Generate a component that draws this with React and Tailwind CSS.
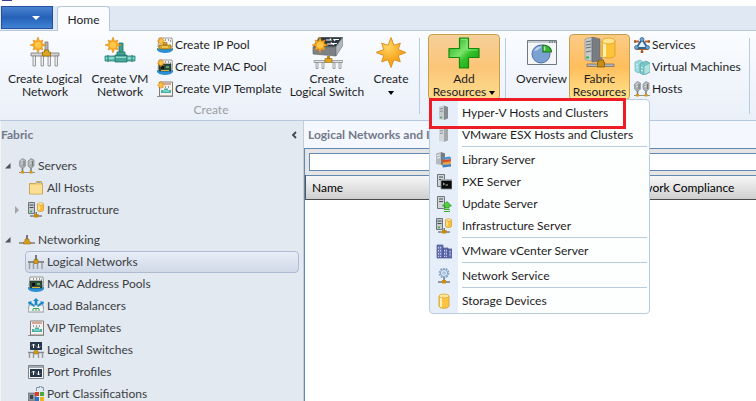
import React from "react";

const burst = (cx, cy, outer, inner) =>
  Array.from({ length: 16 }, (_, i) => {
    const r = i % 2 ? inner : i % 4 ? outer * 0.88 : outer;
    const a = (i * Math.PI) / 8 - Math.PI / 2;
    return `${(cx + r * Math.cos(a)).toFixed(2)},${(cy + r * Math.sin(a)).toFixed(2)}`;
  }).join(" ");

function Burst({ cx, cy, r }) {
  return (
    <g>
      <polygon points={burst(cx, cy, r, r * 0.52)} fill="#f7a81c" stroke="#e08a12" strokeWidth={r / 14} />
      <circle cx={cx} cy={cy} r={r * 0.42} fill="#ffc64a" />
    </g>
  );
}

function Svg({ size = 16, children }) {
  return (
    <svg
      aria-hidden="true"
      viewBox={`0 0 ${size} ${size}`}
      className={size === 32 ? "block size-8 shrink-0" : "block size-4 shrink-0"}
    >
      {children}
    </svg>
  );
}

/* Large ribbon icons */

const LogicalNetworkLarge = () => (
  <Svg size={32}>
    <path d="M16 5h3v9h-3z" fill="#b5b5b5" stroke="#777" strokeWidth="0.8" />
    <path d="M2 16h28v3H2z" fill="#d6d6d6" stroke="#767676" strokeWidth="0.8" />
    <path d="M4 19h2.500v10H4zM12 19h2.500v10H12zM19 19h2.500v10H19zM26 19h2.500v10H26z" fill="#ececec" stroke="#858585" strokeWidth="0.8" />
    <path d="M15.500 13h4v2h2v4h-8v-4h2z" fill="#dda51e" stroke="#9a6b0a" strokeWidth="0.8" />
    <Burst cx={9} cy={8} r={8} />
  </Svg>
);

const VmNetworkLarge = () => (
  <Svg size={32}>
    <path d="M15 6h4v12h-4z" fill="#3a9f90" stroke="#1f6f68" strokeWidth="0.8" />
    <path d="M1 19h30v5H1z" fill="#58b9ab" stroke="#2b857c" strokeWidth="0.8" />
    <path d="M2 20.500h28v1.200H2z" fill="#b4e8de" />
    <path d="M13 15h8v4h-8zM11 18h12v7H11z" fill="#46a899" stroke="#1f6f68" strokeWidth="0.8" />
    <path d="M12 19.500h10v1.500H12z" fill="#93d8cc" />
    <path d="M4 18v7M28 18v7" stroke="#2b857c" strokeWidth="1.200" />
    <Burst cx={9} cy={8} r={8} />
  </Svg>
);

const LogicalSwitchLarge = () => (
  <Svg size={32}>
    <path d="M8 0h24l-7 10H2z" fill="#2c3740" stroke="#9aa1a7" strokeWidth="0.7" />
    <path d="M2 10h23v9L2 17z" fill="#7d8186" stroke="#5a5f64" strokeWidth="0.6" />
    <path d="M25 10l7-10v8l-7 11z" fill="#b3b8bc" stroke="#6b7075" strokeWidth="0.6" />
    <path d="M15 3h5l-1-1.500M28 2.500h-5l1 1.500M16 7h5l-1-1.500M26 6.500h-4l1 1.500" fill="none" stroke="#fff" strokeWidth="1.200" />
    <path d="M16 19h3v5h-3z" fill="#b98a22" />
    <path d="M3 23.500h11v2H3zM21 23.500h11v2H21z" fill="#e2e2e2" stroke="#858585" strokeWidth="0.7" />
    <path d="M5 25.500h2v6H5zM11 25.500h2v6h-2zM22 25.500h2v6h-2zM28 25.500h2v6h-2z" fill="#ececec" stroke="#858585" strokeWidth="0.7" />
    <path d="M14 21.500h7v4h-7z" fill="#dda51e" stroke="#94690d" strokeWidth="0.6" />
    <Burst cx={9} cy={8} r={8} />
  </Svg>
);

const CreateLarge = () => (
  <Svg size={32}>
    <defs>
      <radialGradient id="burstFill" cx="0.4" cy="0.3">
        <stop offset="0" stopColor="#ffd564" />
        <stop offset="1" stopColor="#f7a51a" />
      </radialGradient>
    </defs>
    <polygon points={burst(16, 15.5, 15, 7.8)} fill="url(#burstFill)" stroke="#dd9224" strokeWidth="1" />
  </Svg>
);

const AddLarge = () => (
  <Svg size={32}>
    <defs>
      <linearGradient id="plusFill" x1="0" y1="0" x2="1" y2="1">
        <stop offset="0" stopColor="#16a812" />
        <stop offset="0.45" stopColor="#7be36b" />
        <stop offset="0.6" stopColor="#35c22a" />
        <stop offset="1" stopColor="#0c9a0b" />
      </linearGradient>
    </defs>
    <path d="M11.500 1h9v10.500H31v9H20.500V31h-9V20.500H1v-9h10.500z" fill="url(#plusFill)" stroke="#118a0f" strokeWidth="1.200" strokeLinejoin="round" />
    <path d="M13 2.500h6v10.500h10.500" fill="none" stroke="#8eea7f" strokeWidth="0.8" />
  </Svg>
);

const OverviewLarge = () => (
  <Svg size={32}>
    <path d="M1.500 3.500h29v24h-29z" fill="#f4f6f8" stroke="#6f7881" />
    <path d="M2 4h28v2H2z" fill="#c3cbd3" />
    <path d="M23 5h1.500M25.500 5H27M28 5h1.500" stroke="#3f4a54" />
    <circle cx="15" cy="17" r="9" fill="#7ba0d2" stroke="#4d73a9" />
    <path d="M8 14c2-4 5-5 8-4-3 1-4 4-8 4z" fill="#c3d6ef" />
    <path d="M17 15V8c4.500 0 8.500 3 8.500 7z" fill="#3db53a" stroke="#197a1b" strokeWidth="1.200" />
    <path d="M18.500 9.500v4" stroke="#b6efa8" strokeWidth="1.500" />
  </Svg>
);

const FabricLarge = () => (
  <Svg size={32}>
    <path d="M1 2l7-2v24l-7-1z" fill="#c6cacd" stroke="#8b9196" strokeWidth="0.6" />
    <path d="M8 0l8 2v22l-8 1z" fill="#777d83" stroke="#5f656a" strokeWidth="0.6" />
    <path d="M2 5l5-1M2 8l5-1M2 11l5-1M2 15l5-1" stroke="#6b7278" strokeWidth="1.200" />
    <path d="M2 20.500h3" stroke="#39b54a" strokeWidth="2" />
    <path d="M18 4v14c0 4 13 4 13 0V4z" fill="#fcc33b" stroke="#d79a19" strokeWidth="0.7" />
    <path d="M20.500 6v14" stroke="#fff0b0" strokeWidth="3" />
    <ellipse cx="24.500" cy="4" rx="6.500" ry="3" fill="#ffe48d" stroke="#d79a19" strokeWidth="0.7" />
    <path d="M3 27h27v2.500H3z" fill="#b5b5b5" stroke="#686868" strokeWidth="0.7" />
    <path d="M15.500 20h3v5h-3z" fill="#858585" />
    <path d="M14.500 23h5v2h1v5h-7v-5h1z" fill="#c78f16" stroke="#83590a" strokeWidth="0.8" />
  </Svg>
);

/* Small icons */

const Comb = ({ y = 0 }) => (
  <g>
    <path d={`M0 ${7 + y}h16v2H0z`} fill="#8b8b8b" />
    <path d={`M1.500 ${9 + y}v6M5.500 ${9 + y}v6M9.500 ${9 + y}v6M14 ${9 + y}v6`} stroke="#9d9d9d" strokeWidth="1.500" />
    <path d={`M6 ${5.5 + y}h4v4H6z`} fill="#d39d1c" stroke="#8b620b" strokeWidth="0.5" />
  </g>
);

const LogicalNetworkIcon = () => (
  <Svg>
    <path d="M7 1h2v5H7z" fill="#777" />
    <Comb />
  </Svg>
);

const PoolBase = ({ children }) => (
  <Svg>
    <path d="M2 1h13l1 9H1z" fill="#f3f3f3" stroke="#777" strokeWidth="0.7" />
    <path d="M5 3h1M8 3h1M11 3h1M13 4h1" stroke="#444" />
    <path d="M0 11h16v2c-2 4-14 4-16 0z" fill="#2a8fd4" />
    <path d="M1 11.500h14" stroke="#86c8ef" />
    {children}
  </Svg>
);

const IpPoolIcon = () => (
  <PoolBase>
    <path d="M2 8h12v4H2zM6 5.500h4V8H6z" fill="#d9a521" stroke="#8d680f" strokeWidth="0.6" />
    <path d="M5 10h6" stroke="#ffe28a" />
    <Burst cx={4} cy={4} r={4} />
  </PoolBase>
);

const MacPoolIcon = ({ fresh }) => (
  <PoolBase>
    <path d="M2 5h12v7H2z" fill="#2d4b3a" stroke="#1d2b22" strokeWidth="0.6" />
    <path d="M4 7h3v3H4z" fill="#101010" />
    <path d="M9 7h3v2H9z" fill="#5ba96d" />
    <path d="M4 11.500h8" stroke="#d9b23c" />
    {fresh && <Burst cx={4} cy={4} r={4} />}
  </PoolBase>
);

const VipIcon = ({ fresh }) => (
  <Svg>
    <path d="M2.500 1h13v14h-13z" fill="#f4f1ee" stroke="#857b75" />
    <path d="M4 3h10" stroke="#b9785a" strokeWidth="1.200" />
    <path d="M5 6h1M8 6h1M11 6h1" stroke="#444" />
    <path d="M4 9h10v3H4zM7 7.500h4V9H7z" fill="#47b0a5" />
    <path d="M6 10h6" stroke="#b6e8e0" />
    <path d="M0 15.500h16" stroke="#8d8d8d" />
    {fresh && <Burst cx={4} cy={4} r={4} />}
  </Svg>
);

const ServicesIcon = () => (
  <Svg>
    <path d="M0 4.500h5M11 4.500h5M2 12h12M8 12v4" stroke="#c1622b" strokeWidth="2" />
    <path d="M1 3v3M15 3v3M6.500 15h3" stroke="#93451b" />
    <path d="M8 2l5.500 9h-11z" fill="#e2f0fa" stroke="#2d6291" strokeWidth="1.800" />
    <circle cx="8" cy="2.500" r="2" fill="#6fa4ce" stroke="#2d6291" strokeWidth="0.7" />
    <circle cx="2.500" cy="10.500" r="2" fill="#6fa4ce" stroke="#2d6291" strokeWidth="0.7" />
    <circle cx="13.500" cy="10.500" r="2" fill="#6fa4ce" stroke="#2d6291" strokeWidth="0.7" />
  </Svg>
);

const VmIcon = () => (
  <Svg>
    <path d="M1 3l5-2 3 2v9l-5 2-3-2z" fill="#9ad9d9" stroke="#6cb8bb" strokeWidth="0.7" />
    <path d="M6 5l6-3 4 2v9l-6 3-4-2z" fill="#7cc6c9" stroke="#4ea1a6" strokeWidth="0.7" />
    <path d="M10 7l6-3v9l-6 3z" fill="#b0e4e2" stroke="#4ea1a6" strokeWidth="0.5" />
    <path d="M2 5l2 1M2 8l2 1M7 8l2 1M7 11l2 1" stroke="#e0f7f5" />
  </Svg>
);

const HostsIcon = () => (
  <Svg>
    <path d="M3.500 9v5M12 9v5" stroke="#777" strokeWidth="1.500" />
    <path d="M0.500 3l3-2.500 3 1.500v6l-2 2h-2l-2-2zM9 3l3-2.500L15 2v6l-2 2h-2L9 8z" fill="#a9afb1" stroke="#8b9193" strokeWidth="0.7" />
    <path d="M2 3.500l2-1M2 6l2-1M10.500 3.500l2-1M10.500 6l2-1" stroke="#dfe4e5" />
    <path d="M5 3v5M13.500 3v5" stroke="#737a7c" />
    <path d="M0 14.500h16" stroke="#929292" />
    <path d="M2 13h3v2.500H2zM10.500 13h3v2.500h-3z" fill="#d89a14" />
  </Svg>
);

const FolderIcon = () => (
  <Svg>
    <path d="M1.500 3.500h6l1-2h5v2h1v10.500h-13z" fill="#f4d078" stroke="#c39b45" strokeWidth="0.8" />
    <path d="M2 5h12v8.500H2z" fill="#fbdf94" />
    <path d="M9 2.700h3.500" stroke="#6ca7df" />
  </Svg>
);

const InfraIcon = () => (
  <Svg>
    <path d="M0.500 0.500h6v11h-6z" fill="#c3c9cc" stroke="#62696e" strokeWidth="0.9" />
    <path d="M1.500 3h4M1.500 5.500h4" stroke="#454d52" />
    <path d="M2 9.500h2" stroke="#35b143" strokeWidth="1.500" />
    <path d="M9.500 2v6c0 2 6 2 6 0V2z" fill="#fbc13b" stroke="#c98f1c" strokeWidth="0.6" />
    <path d="M11 3v5" stroke="#fff0b5" strokeWidth="1.200" />
    <ellipse cx="12.500" cy="2" rx="3" ry="1.300" fill="#ffe594" stroke="#c98f1c" strokeWidth="0.5" />
    <path d="M2 14h12" stroke="#777" strokeWidth="1.400" />
    <path d="M7.500 10h1.500v2H7.500z" fill="#777" />
    <path d="M6 12h4.500v3.500H6z" fill="#c58a10" />
  </Svg>
);

const NetworkingIcon = () => (
  <Svg>
    <path d="M0 11h16" stroke="#999" strokeWidth="2" />
    <path d="M8 3v4" stroke="#777" strokeWidth="2" />
    <path d="M6 7h4v2l1.500 1v2h-7v-2L6 9z" fill="#d49a18" stroke="#936610" strokeWidth="0.5" />
  </Svg>
);

const BalancerIcon = () => (
  <Svg>
    <path d="M1 7h14l1 7H0z" fill="#f0f2f3" stroke="#848b90" strokeWidth="0.8" />
    <path d="M8 0l3 3H9.300v4H6.700V3H5zM0 4l4-1-1 1 4 4-1 1-4-3-1 1zM16 4l-4-1 1 1-4 4 1 1 4-3 1 1z" fill="#1588c9" />
    <path d="M5 10.500h6M5 13v-2M8 13v-2M11 13v-2" stroke="#3ca75a" />
  </Svg>
);

const SwitchIcon = () => (
  <Svg>
    <path d="M2 0h12v8H2z" fill="#26364b" />
    <path d="M5.500 6V2M4 3.500L5.500 2 7 3.500M10.500 2v4M9 4.500L10.500 6 12 4.500" fill="none" stroke="#fff" />
    <path d="M0 10.500h16" stroke="#888" strokeWidth="1.500" />
    <path d="M1.500 11v5M5.500 11v5M10.500 11v5M14.500 11v5" stroke="#999" strokeWidth="1.400" />
    <path d="M6 8.500h4v3.500H6z" fill="#d39d1c" stroke="#8b620b" strokeWidth="0.4" />
  </Svg>
);

const PortProfileIcon = () => (
  <Svg>
    <path d="M0.500 1.500h15v13h-15z" fill="#f4f6f8" stroke="#7a8188" />
    <path d="M1 2h14v2H1z" fill="#a4abb3" />
    <path d="M2 5h12v8H2z" fill="#26364b" />
    <path d="M5.500 11V7M4 8.500L5.500 7 7 8.500M10.500 7v4M9 9.500l1.500 1.500L12 9.500" fill="none" stroke="#fff" />
  </Svg>
);

const PortClassIcon = () => (
  <Svg>
    <path d="M8.500 5V1.500h3V0h2v1.500h2V5" fill="#e3e9f1" stroke="#8092ac" />
    <path d="M0 7h8v8H0z" fill="#8e959b" stroke="#5d6368" strokeWidth="0.6" />
    <path d="M2 9h3v4H2z" fill="#3d454c" />
    <path d="M7 6h4v4H7z" fill="#dd3d27" />
    <path d="M12 6h4v4h-4z" fill="#49a83c" />
    <path d="M7 11h4v4H7z" fill="#2f72c4" />
    <path d="M12 11h4v4h-4z" fill="#efb31d" />
  </Svg>
);

const Tower = ({ light }) => (
  <g>
    <path d="M3 2l5-1.500V15l-5-1z" fill={light ? "#d3d6d8" : "#c6cacc"} />
    <path d="M8 0.500L12 2v11.500L8 15z" fill={light ? "#a3a8ac" : "#858b90"} />
    <path d="M4 4l3-0.500M4 6.500L7 6" stroke="#8d9296" />
  </g>
);

const HyperVIcon = () => (
  <Svg>
    <Tower />
    <path d="M4 12.500h2" stroke="#36b34a" strokeWidth="1.500" />
  </Svg>
);

const EsxIcon = () => (
  <Svg>
    <Tower light />
  </Svg>
);

const LibraryIcon = () => (
  <Svg>
    <path d="M0 1.500L5 0v13l-5-1z" fill="#b5babd" />
    <path d="M5 0l4 1.500V12l-4 1z" fill="#747a7f" />
    <path d="M1 3.500L4 3M1 6l3-0.500" stroke="#f0f2f3" />
    <path d="M6 5.500l8-1 1.500 2-8 1.500z" fill="#4f94cf" />
    <path d="M6 8l9-1v2.500l-8 1.500z" fill="#d3502f" />
    <path d="M7 10.500l8-1V12l-8 1z" fill="#e9a13a" />
    <path d="M6 13l9-1v2.500L7 15.500z" fill="#3e82bd" />
  </Svg>
);

const SmallServer = () => (
  <g>
    <path d="M1.500 0.500h7v12h-7z" fill="#d0d5d7" stroke="#62696e" strokeWidth="0.9" />
    <path d="M3 3h4M3 5.500h4" stroke="#4b5358" />
  </g>
);

const PxeIcon = () => (
  <Svg>
    <SmallServer />
    <path d="M5 5.500h11V15H5z" fill="#0b0b0b" stroke="#8c9297" strokeWidth="0.8" />
    <path d="M5 6h11" stroke="#c5cad0" strokeWidth="1.200" />
    <path d="M7 9l1.500 1L7 11M9.500 11H12" fill="none" stroke="#fff" strokeWidth="0.7" />
  </Svg>
);

const UpdateIcon = () => (
  <Svg>
    <SmallServer />
    <path d="M11 5.500l4.500 4.500H13v2H9v-2H6.500z" fill="#53cf3f" stroke="#25951c" strokeWidth="0.8" />
    <path d="M8 13.500h6M8 15.500h6" stroke="#35ac29" />
  </Svg>
);

const VCenterIcon = () => (
  <Svg>
    <path d="M1 2h6v13H1zM7 5h5v10H7zM12 6h4v9h-4z" fill="#6a74b4" stroke="#48508c" strokeWidth="0.7" />
    <path d="M2.500 4v10M4.500 4v10M8.500 7v7M10.500 7v7M14 8v6" stroke="#c9cdec" strokeDasharray="1.500 1.500" />
  </Svg>
);

const ServiceIcon = () => (
  <Svg>
    <circle cx="8" cy="5" r="4.500" fill="none" stroke="#82a7c9" strokeWidth="1.800" strokeDasharray="1.800 1" />
    <circle cx="8" cy="5" r="3.500" fill="#e4eff9" stroke="#7ba2c5" />
    <circle cx="8" cy="5" r="1.200" fill="#fff" stroke="#668db1" strokeWidth="0.7" />
    <path d="M8 9.500v3" stroke="#777" strokeWidth="1.500" />
    <path d="M2 14h12" stroke="#777" strokeWidth="1.500" />
    <path d="M6 12h4v3.500H6z" fill="#cb8e12" />
  </Svg>
);

const StorageIcon = () => (
  <Svg>
    <path d="M3 3v10c0 3 10 3 10 0V3z" fill="#fbc443" stroke="#d89b24" strokeWidth="0.8" />
    <path d="M5 4v10" stroke="#fff2b8" strokeWidth="2" />
    <ellipse cx="8" cy="3" rx="5" ry="2" fill="#ffe797" stroke="#d89b24" strokeWidth="0.7" />
  </Svg>
);

/* Ribbon parts */

const tones = {
  plain: "border-transparent",
  open: "border-[#c2a050] bg-linear-to-b from-[#f5d09a] via-[#fcc577] to-[#fbdc8e]",
  active: "border-[#c2a050] bg-linear-to-b from-[#fbcb86] via-[#ffbe5b] to-[#ffe38f]",
};

const Arrow = () => <span className="inline-block border-x-3 border-t-4 border-x-transparent border-t-black align-middle" />;

function LargeButton({ icon, children, tone = "plain", className }) {
  return (
    <button
      type="button"
      className={`flex h-[66px] shrink-0 flex-col items-center gap-[3px] rounded-sm border pt-[2px] text-center leading-[13px] whitespace-nowrap ${tones[tone]} ${className}`}
    >
      {icon}
      <span>{children}</span>
    </button>
  );
}

function SmallButton({ icon, label }) {
  return (
    <button type="button" className="flex h-[22px] items-center gap-[2px] whitespace-nowrap">
      {icon}
      {label}
    </button>
  );
}

const Divider = () => <div className="mt-1 h-[76px] w-px shrink-0 bg-[#b9cbdf]" />;

const menuGroups = [
  [
    ["Hyper-V Hosts and Clusters", HyperVIcon],
    ["VMware ESX Hosts and Clusters", EsxIcon],
  ],
  [
    ["Library Server", LibraryIcon],
    ["PXE Server", PxeIcon],
    ["Update Server", UpdateIcon],
    ["Infrastructure Server", InfraIcon],
  ],
  [["VMware vCenter Server", VCenterIcon]],
  [["Network Service", ServiceIcon]],
  [["Storage Devices", StorageIcon]],
];

function ResourceMenu() {
  return (
    <div className="absolute top-[65px] left-px z-20 w-[221px] rounded-sm border border-[#b9cbdf] bg-linear-to-r from-[#e6eef9] from-[28px] to-[#fdfefe] to-[28px] pt-[2px] pb-px">
      {menuGroups.map((group, g) => (
        <div key={g} role="group">
          {g > 0 && <div className="mr-[2px] ml-[32px] h-[3px] border-t border-[#b9cbdf]" />}
          {group.map(([label, Icon]) => (
            <button key={label} type="button" className="flex h-[22px] w-full items-center gap-[10px] pl-[6px] whitespace-nowrap">
              <Icon />
              {label}
            </button>
          ))}
        </div>
      ))}
      <div className="pointer-events-none absolute -top-[2px] -left-px h-[31px] w-[197px] border-3 border-[#ee1c25]" />
    </div>
  );
}

function Ribbon() {
  return (
    <div className="relative z-10 flex h-[91px] shrink-0 border-y border-[#b5c8de] bg-linear-to-b from-[#fafcff] to-[#eaf0f9] pt-[3px] pl-[3px]">
      <div className="flex w-[416px] shrink-0 flex-col">
        <div className="flex">
          <LargeButton className="w-[84px]" icon={<LogicalNetworkLarge />}>
            Create Logical
            <br />
            Network
          </LargeButton>
          <LargeButton className="w-[66px]" icon={<VmNetworkLarge />}>
            Create VM
            <br />
            Network
          </LargeButton>
          <div className="w-[131px] shrink-0 pl-1">
            <SmallButton icon={<IpPoolIcon />} label="Create IP Pool" />
            <SmallButton icon={<MacPoolIcon fresh />} label="Create MAC Pool" />
            <SmallButton icon={<VipIcon fresh />} label="Create VIP Template" />
          </div>
          <LargeButton className="w-[86px]" icon={<LogicalSwitchLarge />}>
            Create
            <br />
            Logical Switch
          </LargeButton>
          <LargeButton className="w-[42px]" icon={<CreateLarge />}>
            Create
            <br />
            <Arrow />
          </LargeButton>
        </div>
        <div className="mt-[2px] text-center leading-4 text-[#9b9ea3]">Create</div>
      </div>
      <Divider />
      <div className="relative ml-2 shrink-0">
        <LargeButton tone="open" className="w-[72px]" icon={<AddLarge />}>
          Add
          <br />
          Resources <Arrow />
        </LargeButton>
        <ResourceMenu />
      </div>
      <div className="w-[5px] shrink-0" />
      <Divider />
      <div className="ml-2 flex shrink-0">
        <LargeButton className="w-[55px]" icon={<OverviewLarge />}>
          Overview
        </LargeButton>
        <LargeButton tone="active" className="w-[61px]" icon={<FabricLarge />}>
          Fabric
          <br />
          Resources
        </LargeButton>
        <div className="w-[119px] pl-1">
          <SmallButton icon={<ServicesIcon />} label="Services" />
          <SmallButton icon={<VmIcon />} label="Virtual Machines" />
          <SmallButton icon={<HostsIcon />} label="Hosts" />
        </div>
      </div>
      <Divider />
    </div>
  );
}

/* Navigation tree */

const Expanded = () => (
  <svg aria-hidden="true" viewBox="0 0 8 8" className="size-2 shrink-0">
    <path d="M6.500 1v5.500H1z" fill="#505357" />
  </svg>
);

const Collapsed = () => (
  <svg aria-hidden="true" viewBox="0 0 8 8" className="size-2 shrink-0">
    <path d="M2 0l4 4-4 4z" fill="#a3a6aa" />
  </svg>
);

function TreeRoot({ icon, label }) {
  return (
    <button type="button" className="flex h-[22px] shrink-0 items-center gap-[3px] pl-[3px]">
      <Expanded />
      <span className="ml-1">{icon}</span>
      {label}
    </button>
  );
}

function TreeItem({ icon, label, selected, twisty }) {
  return (
    <div className="flex h-[22px] shrink-0 items-center pr-1">
      <span className="flex w-[24px] shrink-0 justify-end pr-1">{twisty && <Collapsed />}</span>
      <button
        type="button"
        className={`flex h-[22px] flex-1 items-center gap-[3px] rounded-sm border pl-[2px] ${
          selected ? "border-[#aebbd2] bg-linear-to-b from-[#e9eef8] to-[#d0d9e7]" : "border-transparent"
        }`}
      >
        {icon}
        {label}
      </button>
    </div>
  );
}

function Sidebar() {
  return (
    <nav className="flex w-[304px] shrink-0 flex-col overflow-hidden border-r border-l border-r-[#c3cedd] border-l-[#f4f4f4] bg-[#e2e9f1] text-[#3b3d41]">
      <div className="flex h-[34px] shrink-0 items-start justify-between pt-[5px] pr-[6px]">
        <h2 className="font-bold text-[#72798a]">Fabric</h2>
        <button type="button" aria-label="Collapse pane" className="mt-[5px]">
          <svg aria-hidden="true" viewBox="0 0 6 8" className="h-2 w-[6px]">
            <path d="M5 1L2 4l3 3" fill="none" stroke="#44474c" strokeWidth="1.800" />
          </svg>
        </button>
      </div>
      <TreeRoot icon={<HostsIcon />} label="Servers" />
      <TreeItem icon={<FolderIcon />} label="All Hosts" />
      <TreeItem icon={<InfraIcon />} label="Infrastructure" twisty />
      <div className="h-2 shrink-0" />
      <TreeRoot icon={<NetworkingIcon />} label="Networking" />
      <TreeItem icon={<LogicalNetworkIcon />} label="Logical Networks" selected />
      <TreeItem icon={<MacPoolIcon />} label="MAC Address Pools" />
      <TreeItem icon={<BalancerIcon />} label="Load Balancers" />
      <TreeItem icon={<VipIcon />} label="VIP Templates" />
      <TreeItem icon={<SwitchIcon />} label="Logical Switches" />
      <TreeItem icon={<PortProfileIcon />} label="Port Profiles" />
      <TreeItem icon={<PortClassIcon />} label="Port Classifications" />
    </nav>
  );
}

function Content() {
  return (
    <main className="flex min-w-0 flex-1 flex-col bg-white">
      <h1 className="h-[27px] bg-[#f4f7fd] pt-[5px] pl-1 font-bold text-[#72798a]">Logical Networks and IP Pools</h1>
      <div className="flex flex-1 flex-col border-t border-l border-[#6389b0]">
        <div className="bg-[#e5e5e5] py-1 pl-1">
          <input aria-label="Search" className="block h-[18px] w-full border border-r-0 border-[#6389b0] bg-white px-1 outline-none" />
        </div>
        <table className="w-full table-fixed border-t border-[#6389b0]">
          <thead>
            <tr className="h-6 border-b border-[#4b4b4b] bg-linear-to-b from-[#f7f7f7] to-[#cfcfcf] text-left text-black">
              <th className="w-[318px] border-l border-[#555] pl-[6px] font-normal">Name</th>
              <th className="font-normal whitespace-nowrap">Network Compliance</th>
            </tr>
          </thead>
        </table>
      </div>
    </main>
  );
}

export default function App() {
  return (
    <div className="flex h-screen flex-col overflow-hidden bg-white font-[Lato,'Open_Sans',sans-serif] text-[12px] leading-[18px] text-[#1d1d1f]">
      <div className="h-[6px] shrink-0 pl-[2px]">
        <div className="h-px w-[10px] bg-[#3b3b98]" />
      </div>
      <header className="flex h-6 shrink-0 bg-[#dfe8f3] pl-px">
        <button
          type="button"
          aria-label="Application menu"
          className="flex h-[23px] w-[52px] items-center justify-center border border-[#24509f] bg-linear-to-b from-[#4a83cf] via-[#2661b9] to-[#3f83d4] pl-[18px]"
        >
          <span className="border-x-4 border-t-4 border-x-transparent border-t-white" />
        </button>
        <button type="button" className="relative z-20 ml-1 h-[25px] w-[53px] shrink-0 rounded-t-sm border border-b-0 border-[#b5c8de] bg-[#fafcff] pt-[2px]">
          Home
        </button>
      </header>
      <Ribbon />
      <div className="flex min-h-0 flex-1">
        <Sidebar />
        <Content />
      </div>
    </div>
  );
}
